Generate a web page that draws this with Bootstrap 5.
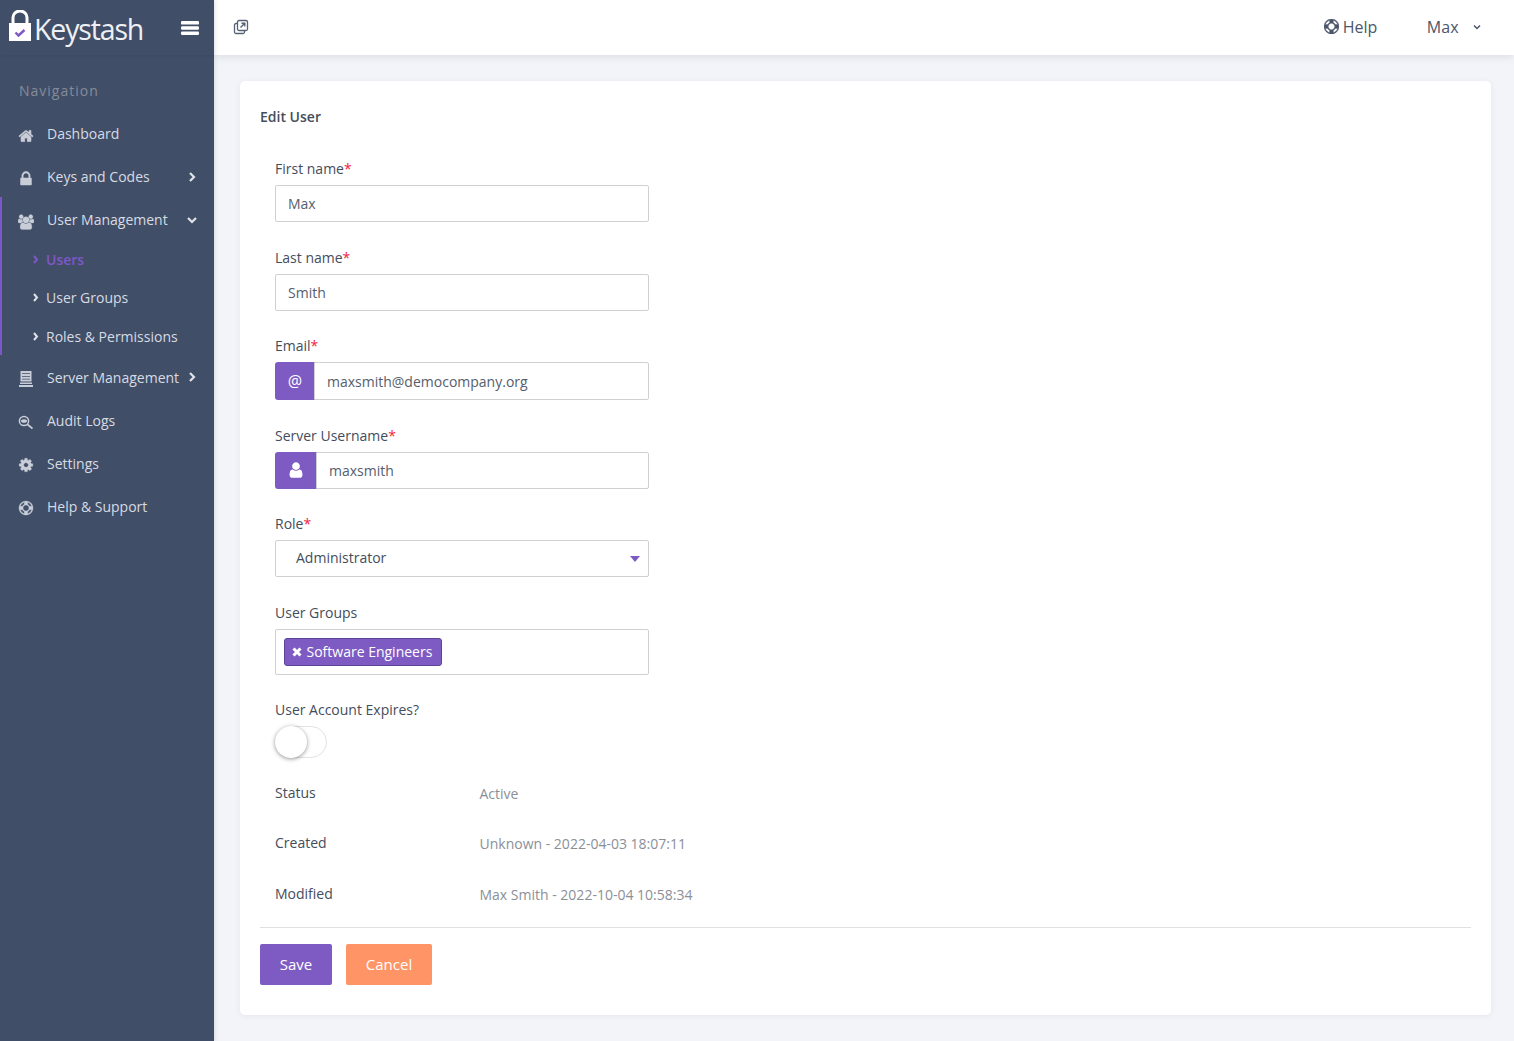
<!DOCTYPE html>
<html lang="en">
<head>
<meta charset="utf-8">
<title>Keystash - Edit User</title>
<link href="https://cdn.jsdelivr.net/npm/bootstrap@5.3.0/dist/css/bootstrap.min.css" rel="stylesheet">
<style>
html,body{height:100%}
body{font-family:"Open Sans","Liberation Sans",sans-serif;font-size:14px;color:#444d5c;background:#f3f4f9;overflow:hidden}
.app{height:1041px}
.sidebar{width:214px;flex:0 0 214px;background:#414e67;box-shadow:1px 0 4px rgba(40,50,80,.12);position:relative;z-index:3}
.brand{height:55px;padding:0 15px 0 9px;box-shadow:0 1px 2px rgba(30,40,60,.06)}
.brand-name{font-size:28.5px;font-weight:400;letter-spacing:-1.15px;color:#eef0f4;line-height:55px;margin-left:3px;margin-top:4px}
.logo{width:22px;height:31px;margin-top:-5px;display:block}
.burger{width:18px;height:14px;display:block}
.nav-title{color:#858c99;letter-spacing:1px;font-size:14px;line-height:20px;padding:26px 0 0 19px;margin-bottom:11px}
.side-item{height:43px;color:#d6dbe4;padding-left:18px;padding-right:16px;text-decoration:none}
.side-icon{width:16px;height:16px;flex:0 0 16px;fill:#c8cdd7;margin-right:13px;margin-top:4px}
.side-icon.fa{stroke:#c8cdd7;stroke-width:30}
.side-label{flex:1 1 auto;white-space:nowrap}
.chev{width:12px;height:12px;fill:none;stroke:#dfe3ea;stroke-width:2.2}
.group{border-left:2px solid #7e57c8;margin:-1px 0 .8px;padding-top:1px}
.group .side-item{padding-left:16px}
.sub{height:38.6px;color:#d6dbe4;padding-left:30px;text-decoration:none}
.sub .chev{width:7px;height:9px;margin-right:7px;stroke-width:2}
.sub.on{color:#7e57c8;font-weight:600}
.sub.on .chev{stroke:#7e57c8}
.subs{margin:-1px 0 -.8px}
.main{min-width:0}
.topbar{height:55px;background:#fff;box-shadow:0 2px 8px rgba(60,70,100,.12);padding:0 33.500px 2px 19px;color:#4b566b;font-size:16px;position:relative;z-index:2}
.ext{width:16px;height:16px;fill:none;stroke:#566176;stroke-width:1.3}
.help{margin-right:49.500px}
.help svg{width:15px;height:15px;fill:#4b566b;stroke:#4b566b;stroke-width:40;margin-right:4px}
.caret-s{width:8px;height:6px;fill:none;stroke:#4b566b;stroke-width:1.5;margin-left:14px}
.ring{stroke:#c8cdd7;stroke-width:40}
.content{padding:26px 23px 26px 26px}
.panel{background:#fff;border:0;border-radius:5px;box-shadow:0 1px 6px rgba(60,70,100,.07);height:934px;padding:25px 20px 0}
.panel-title{font-weight:600;font-size:14px;line-height:21px;color:#444d5c;margin:0 0 31px}
.form-wrap{width:404px;padding:0 15px}
.fg{margin-bottom:24.6px}
.fg.tight{margin-bottom:23.6px}
.fg label{line-height:21px;color:#444d5c;display:block;margin-bottom:6px;font-size:14px}
.req{color:#f5223f}
.form-control,.form-select{font-size:14px;height:37px;border:1px solid #cfd0d3;border-radius:2px;color:#555e6c;padding:0 12px;box-shadow:none}
.email .form-control{height:38px}
.form-select{padding:0 0 2px 20px;color:#444d5c;background-image:none}
.select-wrap{position:relative}
.select-wrap svg{position:absolute;right:9px;top:16px;width:10px;height:6px;fill:#7e5bc2}
.input-group-text{background:#7e5bc2;border:0;color:#fff;border-radius:3px 0 0 3px;font-size:16px;justify-content:center;padding:0}
.email .input-group-text{width:40px}
.userg .input-group-text{width:42px}
.userg svg{width:18px;height:18px;fill:#fff}
.tagbox{height:46px;border:1px solid #cfd0d3;border-radius:2px;padding:8px}
.tag{background:#7e5bc2;border:1px solid #5c4596;border-radius:3px;color:#fff;height:28px;padding:0 9px 0 7px;line-height:26px;display:inline-flex;align-items:center}
.tag svg{width:10px;height:10px;margin-right:4.500px;fill:none;stroke:#fff;stroke-width:3}
.toggle{width:52px;height:32px;border:1px solid #e2e3e6;border-radius:16px;position:relative;background:#fff;margin-bottom:24px}
.toggle i{position:absolute;left:-1px;top:-1px;width:32px;height:32px;border-radius:50%;background:#fff;box-shadow:0 1px 4px rgba(0,0,0,.42)}
.info{line-height:21px;margin-bottom:28.5px}
.info .k{width:204px;flex:0 0 204px;color:#444d5c}
.info .v{color:#8b8f98;margin:1px 0 0 .5px}
.sep{border:0;border-top:1px solid #dfe0e3;opacity:1;margin:22px 0 16px}
.btn-save,.btn-cancel{height:41px;border:0;border-radius:2px;color:#fff;font-size:15px;padding:0}
.btn-save{background:#7e5bc2;width:72px}
.btn-cancel{background:#ff9566;width:86px;margin-left:14px}
.btn-save:hover{background:#7e5bc2;color:#fff}.btn-cancel:hover{background:#ff9566;color:#fff}
</style>
</head>
<body>
<div class="app d-flex">
  <aside class="sidebar d-flex flex-column">
    <div class="brand d-flex align-items-center">
      <svg class="logo" viewBox="0 0 22 31"><path d="M4 15V7.500a7 6.500 0 0 1 14 0V15" fill="none" stroke="#fff" stroke-width="3"/><rect y="13" width="22" height="18" fill="#fff"/><path d="M6.500 22.500l3 3 6-5.500" fill="none" stroke="#7e5bc2" stroke-width="2.400"/></svg>
      <span class="brand-name flex-grow-1">Keystash</span>
      <svg class="burger" viewBox="0 0 18 14" fill="#fff"><rect width="18" height="3.600" rx="1.200"/><rect y="5.200" width="18" height="3.600" rx="1.200"/><rect y="10.400" width="18" height="3.600" rx="1.200"/></svg>
    </div>
    <div class="nav-title">Navigation</div>
    <nav class="d-flex flex-column">
      <a class="side-item d-flex align-items-center" href="#"><svg class="side-icon fa" viewBox="0 0 1792 1792"><path d="M1472 992v480q0 26-19 45t-45 19h-384v-384h-256v384h-384q-26 0-45-19t-19-45v-480q0-1 .5-3t.5-3l575-474 575 474q1 2 1 6zm223-69l-62 74q-8 9-21 11h-3q-13 0-21-7l-692-577-692 577q-12 8-24 7-13-2-21-11l-62-74q-8-10-7-23.500t11-21.500l719-599q32-26 76-26t76 26l244 204v-195q0-14 9-23t23-9h192q14 0 23 9t9 23v408l219 182q10 8 11 21.500t-7 23.500z"/></svg><span class="side-label">Dashboard</span></a>
      <a class="side-item d-flex align-items-center" href="#"><svg class="side-icon" viewBox="91 91 1610 1610"><path d="M640 768h512v-192q0-106-75-181t-181-75-181 75-75 181v192zm832 96v576q0 40-28 68t-68 28h-960q-40 0-68-28t-28-68v-576q0-40 28-68t68-28h32v-192q0-184 132-316t316-132 316 132 132 316v192h32q40 0 68 28t28 68z"/></svg><span class="side-label">Keys and Codes</span><svg class="chev" viewBox="0 0 12 12"><path d="M4 2l4 4-4 4"/></svg></a>
      <div class="group">
        <a class="side-item d-flex align-items-center" href="#"><svg class="side-icon fa" viewBox="0 0 1920 1792"><path d="M593 896q-162 5-265 128h-134q-82 0-138-40.500t-56-118.500q0-353 124-353 6 0 43.500 21t97.500 42.500 119 21.500q67 0 133-23-5 37-5 66 0 139 81 256zm1071 637q0 120-73 189.500t-194 69.500h-874q-121 0-194-69.500t-73-189.500q0-53 3.500-103.500t14-109 26.500-108.500 43-97.500 62-81 85.500-53.500 111.500-20q10 0 43 21.500t73 48 107 48 135 21.500 135-21.500 107-48 73-48 43-21.500q61 0 111.500 20t85.500 53.500 62 81 43 97.500 26.500 108.500 14 109 3.500 103.500zm-1024-1277q0 106-75 181t-181 75-181-75-75-181 75-181 181-75 181 75 75 181zm704 384q0 159-112.500 271.500t-271.500 112.500-271.500-112.500-112.500-271.500 112.500-271.500 271.500-112.500 271.500 112.500 112.500 271.500zm576 225q0 78-56 118.500t-138 40.500h-134q-103-123-265-128 81-117 81-256 0-29-5-66 66 23 133 23 59 0 119-21.500t97.500-42.500 43.500-21q124 0 124 353zm-128-609q0 106-75 181t-181 75-181-75-75-181 75-181 181-75 181 75 75 181z"/></svg><span class="side-label">User Management</span><svg class="chev" viewBox="0 0 12 12"><path d="M2 4l4 4 4-4"/></svg></a>
        <div class="subs d-flex flex-column">
          <a class="sub on d-flex align-items-center" href="#"><svg class="chev" viewBox="0 0 7 9"><path d="M2 1l3 3.500-3 3.500"/></svg>Users</a>
          <a class="sub d-flex align-items-center" href="#"><svg class="chev" viewBox="0 0 7 9"><path d="M2 1l3 3.500-3 3.500"/></svg>User Groups</a>
          <a class="sub d-flex align-items-center" href="#"><svg class="chev" viewBox="0 0 7 9"><path d="M2 1l3 3.500-3 3.500"/></svg>Roles &amp; Permissions</a>
        </div>
      </div>
      <a class="side-item d-flex align-items-center" href="#"><svg class="side-icon" viewBox="0 0 16 16"><path d="M2.500 0h11v10.500h-11zM4 2.200v.7h8v-.7zm0 2.800v.7h8V5zm0 2.800v.7h8v-.7zM2 11.500h12v1.600H2zM1 14h14v2H1z" fill-rule="evenodd"/></svg><span class="side-label">Server Management</span><svg class="chev" viewBox="0 0 12 12"><path d="M4 2l4 4-4 4"/></svg></a>
      <a class="side-item d-flex align-items-center" href="#"><svg class="side-icon" viewBox="0 0 16 14"><g fill="none" stroke="#c8cdd7"><circle cx="6" cy="6" r="4.600" stroke-width="1.500"/><path d="M9.500 9.500L14.500 13.500" stroke-width="1.700"/></g><ellipse cx="6" cy="6" rx="3" ry="1.800"/></svg><span class="side-label">Audit Logs</span></a>
      <a class="side-item d-flex align-items-center" href="#"><svg class="side-icon fa" viewBox="0 0 1792 1792"><path d="M1152 896q0-106-75-181t-181-75-181 75-75 181 75 181 181 75 181-75 75-181zm512-109v222q0 12-8 23t-20 13l-185 28q-19 54-39 91 35 50 107 138 10 12 10 25t-9 23q-27 37-99 108t-94 71q-12 0-26-9l-138-108q-44 23-91 38-16 136-29 186-7 28-36 28h-222q-14 0-24.500-8.500t-11.500-21.500l-28-184q-49-16-90-37l-141 107q-10 9-25 9-14 0-25-11-126-114-165-168-7-10-7-23 0-12 8-23 15-21 51-66.500t54-70.500q-27-50-41-99l-183-27q-13-2-21-12.500t-8-23.500v-222q0-12 8-23t19-13l186-28q14-46 39-92-40-57-107-138-10-12-10-24 0-10 9-23 26-36 98.500-107.500t94.500-71.500q13 0 26 10l138 107q44-23 91-38 16-136 29-186 7-28 36-28h222q14 0 24.500 8.500t11.500 21.500l28 184q49 16 90 37l142-107q9-9 24-9 13 0 25 10 129 119 165 170 7 8 7 22 0 12-8 23-15 21-51 66.500t-54 70.500q26 50 41 98l183 28q13 2 21 12.500t8 23.500z"/></svg><span class="side-label">Settings</span></a>
      <a class="side-item d-flex align-items-center" href="#"><svg class="side-icon ring" viewBox="-128 -128 2048 2048"><g transform="rotate(45 896 896)"><path d="M896 0q182 0 348 71t286 191 191 286 71 348-71 348-191 286-286 191-348 71-348-71-286-191-191-286-71-348 71-348 191-286 286-191 348-71zm0 128q-190 0-361 90l194 194q82-28 167-28t167 28l194-194q-171-90-361-90zm-678 1129l194-194q-28-82-28-167t28-167l-194-194q-90 171-90 361t90 361zm678 407q190 0 361-90l-194-194q-82 28-167 28t-167-28l-194 194q171 90 361 90zm0-384q159 0 271.500-112.500t112.500-271.500-112.500-271.500-271.500-112.500-271.500 112.500-112.500 271.500 112.500 271.500 271.500 112.500zm484-217l194 194q90-171 90-361t-90-361l-194 194q28 82 28 167t-28 167z"/></g></svg><span class="side-label">Help &amp; Support</span></a>
    </nav>
  </aside>
  <div class="main flex-grow-1 d-flex flex-column">
    <header class="topbar d-flex align-items-center">
      <svg class="ext" viewBox="0 0 16 16"><rect x="4.500" y="1.500" width="10" height="10" rx="1.500"/><path d="M4.500 4.500H3A1.500 1.500 0 0 0 1.500 6v7A1.500 1.500 0 0 0 3 14.500h7a1.500 1.500 0 0 0 1.500-1.500v-1.500"/><path d="M7.500 8.500l4-4M8.500 4.200h3.300v3.300" stroke-width="1.400"/></svg>
      <div class="ms-auto d-flex align-items-center">
        <span class="help d-flex align-items-center"><svg viewBox="0 0 1792 1792"><g transform="rotate(45 896 896)"><path d="M896 0q182 0 348 71t286 191 191 286 71 348-71 348-191 286-286 191-348 71-348-71-286-191-191-286-71-348 71-348 191-286 286-191 348-71zm0 128q-190 0-361 90l194 194q82-28 167-28t167 28l194-194q-171-90-361-90zm-678 1129l194-194q-28-82-28-167t28-167l-194-194q-90 171-90 361t90 361zm678 407q190 0 361-90l-194-194q-82 28-167 28t-167-28l-194 194q171 90 361 90zm0-384q159 0 271.500-112.500t112.500-271.500-112.500-271.500-271.500-112.500-271.500 112.500-112.500 271.500 112.500 271.500 271.500 112.500zm484-217l194 194q90-171 90-361t-90-361l-194 194q28 82 28 167t-28 167z"/></g></svg>Help</span>
        <span class="d-flex align-items-center">Max<svg class="caret-s" viewBox="0 0 8 6"><path d="M1 1.500l3 3 3-3"/></svg></span>
      </div>
    </header>
    <main class="content">
      <div class="card panel">
        <h6 class="panel-title">Edit User</h6>
        <form class="form-wrap">
          <div class="fg"><label>First name<span class="req">*</span></label><input class="form-control" value="Max"></div>
          <div class="fg"><label>Last name<span class="req">*</span></label><input class="form-control" value="Smith"></div>
          <div class="fg email"><label>Email<span class="req">*</span></label><div class="input-group"><span class="input-group-text">@</span><input class="form-control" value="maxsmith@democompany.org"></div></div>
          <div class="fg userg"><label>Server Username<span class="req">*</span></label><div class="input-group"><span class="input-group-text"><svg viewBox="0 0 1792 1792"><path d="M1536 1399q0 109-62.500 187t-150.500 78h-854q-88 0-150.500-78t-62.500-187q0-85 8.500-160.500t31.500-151.500 58.500-130 94-88.500 134.500-34.500q131 128 313 128t313-128q76 0 134.500 34.500t94 88.500 58.500 130 31.500 151.500 8.500 160.500zm-256-887q0 159-112.500 271.500t-271.500 112.500-271.500-112.500-112.500-271.500 112.500-271.500 271.500-112.500 271.500 112.500 112.500 271.500z"/></svg></span><input class="form-control" value="maxsmith"></div></div>
          <div class="fg"><label>Role<span class="req">*</span></label><div class="select-wrap"><select class="form-select"><option>Administrator</option></select><svg viewBox="0 0 10 6"><path d="M0 0h10L5 6z"/></svg></div></div>
          <div class="fg tight"><label>User Groups</label><div class="tagbox"><span class="tag"><svg viewBox="0 0 10 10"><path d="M1.500 1.500l7 7M8.500 1.500l-7 7"/></svg>Software Engineers</span></div></div>
          <div class="fg mb-0"><label>User Account Expires?</label><div class="toggle"><i></i></div></div>
          <div class="info d-flex"><span class="k">Status</span><span class="v">Active</span></div>
          <div class="info d-flex"><span class="k">Created</span><span class="v text-nowrap">Unknown - 2022-04-03 18:07:11</span></div>
          <div class="info d-flex mb-0"><span class="k">Modified</span><span class="v text-nowrap">Max Smith - 2022-10-04 10:58:34</span></div>
        </form>
        <hr class="sep">
        <div class="d-flex"><button type="button" class="btn btn-save">Save</button><button type="button" class="btn btn-cancel">Cancel</button></div>
      </div>
    </main>
  </div>
</div>
<script src="https://cdn.jsdelivr.net/npm/bootstrap@5.3.0/dist/js/bootstrap.bundle.min.js"></script>
</body>
</html>
